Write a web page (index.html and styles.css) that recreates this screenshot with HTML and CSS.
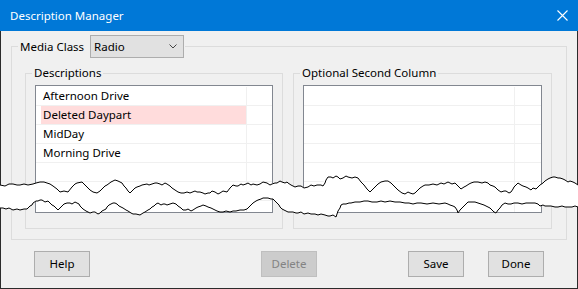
FILE: index.html
```html
<!doctype html>
<html lang="en">
<head>
    <meta charset="UTF-8">
    <title>Description Manager</title>
    <link rel="stylesheet" href="styles.css">
</head>
<body>

    <div class="dialog">
        <div class="titlebar">
            <span class="titlebar__text">Description Manager</span>
            <svg class="titlebar__close" width="11" height="11" viewBox="0 0 11 11">
                <path d="M0.5 0.5 L10.5 10.5 M10.5 0.5 L0.5 10.5" stroke="#fff" stroke-width="1.1" fill="none"/>
            </svg>
        </div>

        <div class="dialog__body">
            <fieldset class="group group-main">
                <legend class="group-main__legend">
                    <span>Media Class</span>
                    <div class="combo">
                        <span>Radio</span>
                        <svg class="combo__arrow" width="8" height="5" viewBox="0 0 8 5">
                            <path d="M0.5 0.5 L4 4 L7.5 0.5" stroke="#444" stroke-width="1" fill="none"/>
                        </svg>
                    </div>
                </legend>
                <div class="group-row">
                    <fieldset class="group group-sub group-sub--first">
                        <legend class="group-sub__legend">Descriptions</legend>
                        <div class="listbox">
                            <div class="listbox__row"><div class="listbox__cell"><span class="listbox__label">Afternoon Drive</span></div></div>
                            <div class="listbox__row"><div class="listbox__cell"><span class="listbox__label listbox__label--deleted">Deleted Daypart</span></div></div>
                            <div class="listbox__row"><div class="listbox__cell"><span class="listbox__label">MidDay</span></div></div>
                            <div class="listbox__row"><div class="listbox__cell"><span class="listbox__label">Morning Drive</span></div></div>
                            <div class="listbox__row"><div class="listbox__cell"><span class="listbox__label"></span></div></div>
                            <div class="listbox__row"><div class="listbox__cell"><span class="listbox__label"></span></div></div>
                            <div class="listbox__row"><div class="listbox__cell"><span class="listbox__label"></span></div></div>
                        </div>
                    </fieldset>
                    <fieldset class="group group-sub">
                        <legend class="group-sub__legend">Optional Second Column</legend>
                        <div class="listbox">
                            <div class="listbox__row"><div class="listbox__cell"></div></div>
                            <div class="listbox__row"><div class="listbox__cell"></div></div>
                            <div class="listbox__row"><div class="listbox__cell"></div></div>
                            <div class="listbox__row"><div class="listbox__cell"></div></div>
                            <div class="listbox__row"><div class="listbox__cell"></div></div>
                            <div class="listbox__row"><div class="listbox__cell"></div></div>
                            <div class="listbox__row"><div class="listbox__cell"></div></div>
                        </div>
                    </fieldset>
                </div>
            </fieldset>

            <div class="buttons">
                <div class="buttons__left">
                    <div class="btn">Help</div>
                </div>
                <div class="btn btn--disabled">Delete</div>
                <div class="buttons__right">
                    <div class="btn">Save</div>
                    <div class="btn">Done</div>
                </div>
            </div>
        </div>

        <!-- torn paper effect across the middle -->
        <svg class="tear" width="578" height="289" viewBox="0 0 578 289">
            <polygon fill="#fff" points="0,185 13,184 33,184 40,182 47,183 53,186 60,192 68,192 77,183 82,182 90,190 97,193 107,185 115,180 122,183 130,193 137,187 147,184 157,183 167,184 178,192 190,193 200,192 210,193 220,193 227,192 233,185 243,185 253,184 267,183 277,183 287,182 288,183 295,187 308,187 321,185 328,177 348,177 358,178 370,192 381,182 388,181 398,190 405,194 415,193 425,185 441,183 455,183 461,189 471,183 485,182 495,187 501,192 511,192 518,183 528,188 536,189 545,181 555,177 565,180 575,183 578,185 578,207 565,207 551,206 540,206 535,203 518,203 505,203 496,213 488,207 475,202 468,202 458,213 455,207 445,203 421,203 405,203 385,202 368,201 351,203 341,205 336,217 325,215 311,214 298,213 288,212 287,212 280,207 273,199 263,198 253,203 247,209 233,211 220,212 213,209 203,205 193,210 183,210 173,203 167,205 158,203 150,209 140,215 133,214 123,208 115,203 107,207 100,213 90,213 83,209 77,203 67,203 58,210 50,203 40,200 33,203 27,209 13,210 0,208"/>
            <polyline fill="none" stroke="#000" stroke-width="1" points="0,185 5,186 9,184 13,184 17,185 20,185 24,184 28,185 33,184 36,183 40,182 44,182 47,183 50,184 53,186 57,189 60,192 64,191 68,192 72,187 75,184 77,183 82,182 84,184 86,186 88,188 90,190 93,192 97,193 100,191 102,189 105,186 107,185 111,182 113,181 115,180 118,181 122,183 124,186 126,188 128,191 130,193 133,190 135,188 137,187 140,186 142,185 147,184 149,185 152,184 155,183 157,183 160,184 162,185 165,183 167,184 170,186 172,188 175,190 178,192 181,193 184,193 187,192 190,193 195,191 197,192 200,192 203,193 205,194 208,193 210,193 212,191 215,192 218,194 220,193 223,191 227,192 230,188 233,185 236,186 238,186 241,184 243,185 246,184 248,183 251,185 253,184 257,185 260,184 263,182 267,183 270,185 272,184 275,183 277,183 280,181 282,182 285,183 287,182 288,183 291,185 295,187 298,186 301,186 304,188 308,187 311,185 314,186 317,185 321,185 323,186 325,183 326,180 328,177 331,177 333,178 336,176 338,177 340,179 343,178 346,176 348,177 352,178 355,177 358,178 361,182 364,185 367,189 370,192 373,189 375,187 378,184 381,182 385,181 388,181 391,183 393,185 396,188 398,190 402,193 405,194 408,192 410,193 413,194 415,193 418,190 420,188 423,186 425,185 429,185 433,184 437,185 441,183 444,184 448,182 452,184 455,183 458,186 461,189 464,187 466,186 469,184 471,183 474,182 478,182 482,183 485,182 488,183 490,185 493,186 495,187 498,190 501,192 504,191 506,191 509,193 511,192 513,189 514,187 516,185 518,183 521,185 523,186 526,187 528,188 531,190 533,188 536,189 538,187 540,185 543,183 545,181 548,179 550,178 553,177 555,177 558,178 560,178 563,179 565,180 568,182 570,181 573,182 575,183 578,185"/>
            <polyline fill="none" stroke="#000" stroke-width="1" points="0,208 3,208 6,209 9,208 13,210 17,209 20,210 24,209 27,209 30,206 32,205 33,203 36,201 38,201 40,200 42,200 45,202 48,201 50,203 52,205 54,206 56,208 58,210 60,208 62,206 64,204 67,203 70,203 72,204 75,202 77,203 79,204 80,206 83,209 86,211 90,213 93,212 95,212 98,214 100,213 102,211 104,210 106,209 107,207 109,205 111,204 113,203 115,203 117,204 119,206 121,207 123,208 126,210 128,211 131,213 133,214 136,214 140,215 143,213 145,212 148,210 150,209 152,207 154,206 156,204 158,203 161,205 163,204 165,204 167,205 170,204 173,203 176,204 178,206 181,208 183,210 186,210 188,209 191,211 193,210 196,208 198,207 201,206 203,205 206,206 208,207 211,208 213,209 215,210 217,211 220,212 223,212 226,211 230,212 233,211 236,211 240,210 244,210 247,209 249,207 250,206 252,204 253,203 256,201 258,200 261,199 263,198 266,198 268,198 271,199 273,199 275,201 277,203 279,205 280,207 282,209 284,210 286,211 288,212 290,212 293,212 296,213 298,213 301,212 304,214 308,213 311,214 315,214 318,215 321,214 325,215 328,216 330,216 333,215 336,217 337,214 338,211 340,208 341,205 343,204 346,204 349,203 351,203 355,202 360,202 364,201 368,201 372,202 377,202 381,201 385,202 390,201 395,202 400,202 405,203 409,203 413,204 417,203 421,203 427,204 433,203 439,204 445,203 448,204 450,205 453,206 455,207 457,210 458,213 460,210 462,208 465,205 468,202 471,202 475,202 478,203 481,204 484,205 488,207 490,208 492,210 494,212 496,213 498,210 500,208 502,205 505,203 508,204 511,204 514,203 518,203 522,204 526,203 530,203 535,203 538,204 540,206 543,205 545,206 548,206 551,206 555,207 558,207 562,206 565,207 568,207 572,207 575,206 578,207"/>
        </svg>
    </div>

</body>
</html>
```

FILE: styles.css
```css
*,*:before,*:after{
    box-sizing: border-box;
}
body{
    margin: 0;
    padding: 0;
    background: #f0f0f0;
    font-family: "Noto Sans", sans-serif;
    font-size: 11px;
    color: #000;
}
.dialog{
    position: relative;
    width: 578px;
    height: 289px;
    overflow: hidden;
}
.titlebar{
    display: flex;
    justify-content: space-between;
    align-items: center;
    height: 31px;
    padding: 0 10px 0 10px;
    background: #0078d7;
    color: #fff;
    font-size: 11.5px;
}
.titlebar__close{
    display: block;
    margin-top: -1px;
}
.dialog__body{
    height: 258px;
    padding: 4px 10px 0 10px;
    background: #f0f0f0;
    border: 1px solid #2b2b2b;
    border-top: none;
}
.group{
    margin: 0;
    min-width: 0;
    border: 1px solid #dcdcdc;
}
.group-main{
    padding: 7px 14px 10px 6px;
}
.group-main__legend{
    display: flex;
    align-items: center;
    padding: 0 1px 0 2px;
    font-size: 11.5px;
}
.combo{
    display: flex;
    justify-content: space-between;
    align-items: center;
    width: 94px;
    height: 23px;
    margin-left: 6px;
    padding: 0 6px 0 3px;
    background: #e1e1e1;
    border: 1px solid #adadad;
}
.combo__arrow{
    display: block;
}
.group-row{
    display: flex;
    gap: 10px;
    margin-left: 7px;
}
.group-sub{
    flex: 1;
    padding: 4px 9px 15px 6px;
}
.group-sub--first{
    flex: 0 0 258px;
}
.group-sub__legend{
    padding: 0 2px;
    line-height: 16px;
    font-size: 11.5px;
}
.listbox{
    height: 128px;
    margin-left: 3px;
    padding-top: 1px;
    background: #fff;
    border: 1px solid #828790;
    overflow: hidden;
    font-size: 11.5px;
}
.listbox__row{
    display: flex;
    height: 19px;
    border-bottom: 1px solid #f0f0f0;
}
.listbox__cell{
    display: flex;
    width: 211px;
    padding-left: 5px;
    border-right: 1px solid #f0f0f0;
}
.listbox__label{
    flex: 1;
    padding-left: 2px;
    line-height: 18px;
}
.listbox__label--deleted{
    background: #ffdcdc;
}
.buttons{
    display: grid;
    grid-template-columns: 1fr auto 1fr;
    align-items: center;
    margin-top: 11px;
    padding: 0 23px;
    font-size: 11.5px;
}
.buttons__right{
    display: flex;
    justify-content: flex-end;
    gap: 24px;
}
.btn{
    display: flex;
    justify-content: center;
    align-items: center;
    width: 56px;
    height: 26px;
    padding-bottom: 1px;
    background: #e1e1e1;
    border: 1px solid #adadad;
}
.btn--disabled{
    background: #cccccc;
    border-color: #bfbfbf;
    color: #838383;
}
.tear{
    position: absolute;
    top: 0;
    left: 0;
    pointer-events: none;
}
```
